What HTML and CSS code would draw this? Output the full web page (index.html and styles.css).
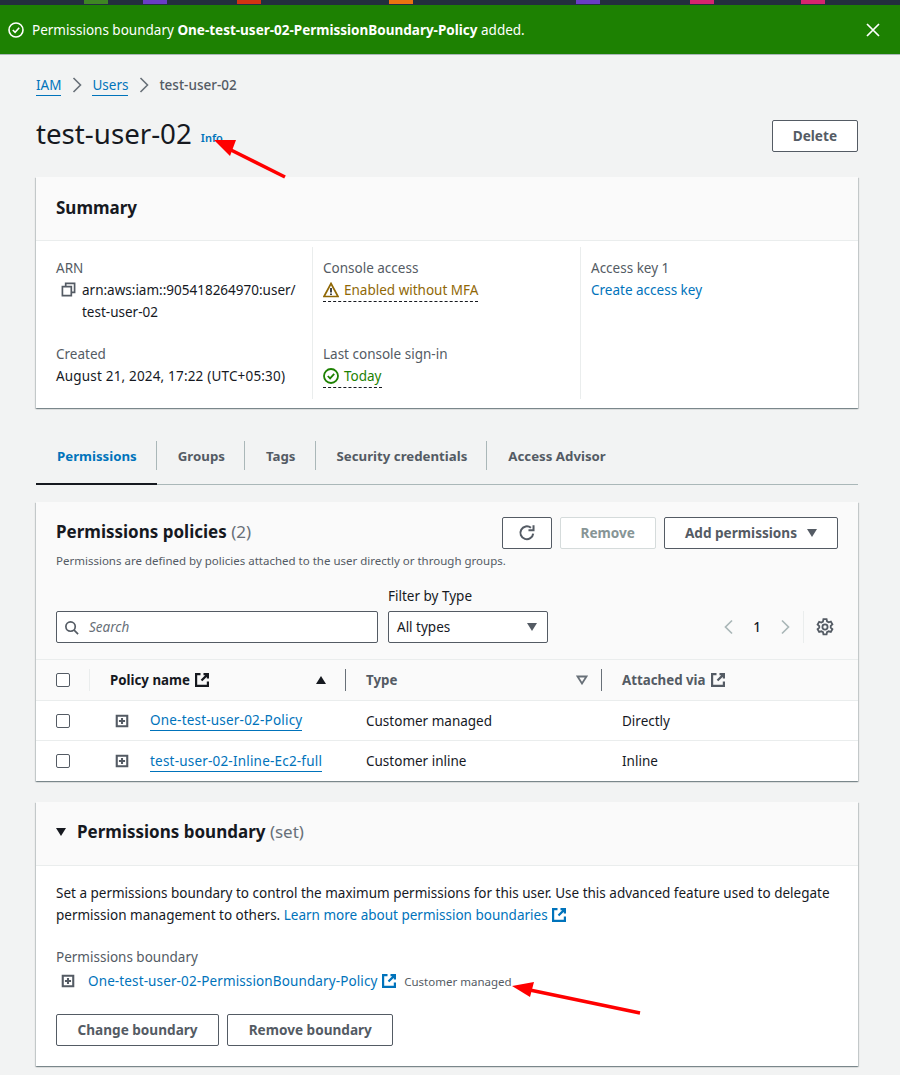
FILE: index.html
```html
<!DOCTYPE html>
<html lang="en">
<head>
  <meta charset="UTF-8">
  <title>test-user-02 | IAM</title>
  <link rel="stylesheet" href="styles.css">
</head>
<body>

<svg width="0" height="0" class="defs">
  <symbol id="ext" viewBox="0 0 16 16">
    <path d="M6.500 2.100H2.100v11.800h11.800V9.500M9.500 2.100h4.400v4.400M13.900 2.100L7.500 8.500" fill="none" stroke="currentColor" stroke-width="2.200"/>
  </symbol>
  <symbol id="expand" viewBox="0 0 16 16">
    <path d="M2 2h12v12H2zM4.500 8h7M8 4.500v7" fill="none" stroke="currentColor" stroke-width="2.400"/>
  </symbol>
</svg>

<div class="topbar">
  <i class="b1"></i><i class="b2"></i><i class="b3"></i><i class="b4"></i><i class="b5"></i><i class="b6"></i><i class="b7"></i>
</div>

<div class="flash">
  <svg class="flash-icon" viewBox="0 0 16 16"><circle cx="8" cy="8" r="7" fill="none" stroke="currentColor" stroke-width="1.600"/><path d="M4.800 8l2.300 2.400 4.100-4.600" fill="none" stroke="currentColor" stroke-width="1.600"/></svg>
  <span class="flash-text">Permissions boundary <strong>One-test-user-02-PermissionBoundary-Policy</strong> added.</span>
  <svg class="flash-close" viewBox="0 0 16 16"><path d="M2 2l12 12M14 2L2 14" fill="none" stroke="currentColor" stroke-width="1.700"/></svg>
</div>

<main>
  <div class="crumbs">
    <a href="#">IAM</a>
    <svg viewBox="0 0 16 16"><path d="M4.500 1l7 7-7 7" fill="none" stroke="currentColor" stroke-width="1.600"/></svg>
    <a href="#">Users</a>
    <svg viewBox="0 0 16 16"><path d="M4.500 1l7 7-7 7" fill="none" stroke="currentColor" stroke-width="1.600"/></svg>
    <span>test-user-02</span>
  </div>

  <div class="page-head">
    <h1>test-user-02</h1>
    <a href="#" class="info">Info</a>
    <button class="btn delete">Delete</button>
  </div>

  <section class="card summary">
    <div class="card-head"><h2>Summary</h2></div>
    <div class="summary-grid">
      <div class="col">
        <div class="field">
          <div class="label">ARN</div>
          <div class="arn">
            <svg viewBox="0 0 16 16"><path d="M5 5V1.500h9.500V11H11M1.500 5H11v9.500H1.500z" fill="none" stroke="#545b64" stroke-width="1.800"/></svg>
            <span>arn:aws:iam::905418264970:user/<br>test-user-02</span>
          </div>
        </div>
        <div class="field created">
          <div class="label">Created</div>
          <div class="value">August 21, 2024, 17:22 (UTC+05:30)</div>
        </div>
      </div>
      <div class="col">
        <div class="field">
          <div class="label">Console access</div>
          <span class="status warn">
            <svg viewBox="0 0 16 16"><path d="M8 1.500L15 14.500H1z" fill="none" stroke="currentColor" stroke-width="1.700"/><path d="M8 6v4.500M8 11.500v1.500" stroke="#16191f" stroke-width="1.600"/></svg>
            Enabled without MFA
          </span>
        </div>
        <div class="field signin">
          <div class="label">Last console sign-in</div>
          <span class="status ok">
            <svg viewBox="0 0 16 16"><circle cx="8" cy="8" r="7" fill="none" stroke="currentColor" stroke-width="1.800"/><path d="M4.800 8l2.300 2.400 4.100-4.600" fill="none" stroke="currentColor" stroke-width="1.800"/></svg>
            Today
          </span>
        </div>
      </div>
      <div class="col">
        <div class="field">
          <div class="label">Access key 1</div>
          <a href="#" class="plain-link">Create access key</a>
        </div>
      </div>
    </div>
  </section>

  <nav class="tabs">
    <a href="#" class="tab active">Permissions</a>
    <a href="#" class="tab">Groups</a>
    <a href="#" class="tab">Tags</a>
    <a href="#" class="tab">Security credentials</a>
    <a href="#" class="tab">Access Advisor</a>
  </nav>

  <section class="card policies">
    <div class="policies-head">
      <div class="title-row">
        <h2>Permissions policies <span class="count">(2)</span></h2>
        <div class="actions">
          <button class="btn refresh">
            <svg viewBox="0 0 16 16"><path d="M13.500 8.500A5.700 5.700 0 1 1 11.500 3.400" fill="none" stroke="currentColor" stroke-width="1.800"/><path d="M13.800 1v4.500H9.300" fill="none" stroke="currentColor" stroke-width="1.800"/></svg>
          </button>
          <button class="btn disabled">Remove</button>
          <button class="btn add">Add permissions <i class="caret"></i></button>
        </div>
      </div>
      <p class="desc">Permissions are defined by policies attached to the user directly or through groups.</p>
      <div class="filters">
        <div class="search">
          <svg viewBox="0 0 16 16"><circle cx="7" cy="7" r="5" fill="none" stroke="currentColor" stroke-width="1.800"/><path d="M10.500 10.500L15 15" stroke="currentColor" stroke-width="1.800"/></svg>
          <span>Search</span>
        </div>
        <div class="type-filter">
          <label>Filter by Type</label>
          <div class="select">All types <i class="caret"></i></div>
        </div>
        <div class="pager">
          <svg class="pg" viewBox="0 0 16 16"><path d="M11 1.500L4.500 8l6.500 6.500" fill="none" stroke="currentColor" stroke-width="1.700"/></svg>
          <span>1</span>
          <svg class="pg" viewBox="0 0 16 16"><path d="M5 1.500L11.500 8 5 14.500" fill="none" stroke="currentColor" stroke-width="1.700"/></svg>
          <div class="gear">
            <svg viewBox="0 0 16 16"><path d="M6.600 1h2.800l.4 2 1.400.8 2-.6 1.400 2.400-1.500 1.400v1.600l1.500 1.400-1.400 2.400-2-.6-1.400.8-.4 2H6.600l-.4-2-1.400-.8-2 .6-1.400-2.400 1.500-1.400V7.200L1.400 5.800l1.400-2.400 2 .6 1.400-.8z" fill="none" stroke="currentColor" stroke-width="1.600"/><circle cx="8" cy="8" r="2.300" fill="none" stroke="currentColor" stroke-width="1.600"/></svg>
          </div>
        </div>
      </div>
    </div>
    <table class="policy-table">
      <thead>
        <tr>
          <th class="c-check"><i class="check"></i></th>
          <th class="c-name">
            <div class="th-inner first">Policy name <svg class="ext"><use href="#ext"/></svg><i class="sort-up"></i></div>
          </th>
          <th class="c-type">
            <div class="th-inner grey">Type<svg class="sort-down" viewBox="0 0 12 10"><path d="M1.500 1.500h9L6 8.500z" fill="none" stroke="currentColor" stroke-width="1.800"/></svg></div>
          </th>
          <th class="c-via"><div class="th-inner grey">Attached via <svg class="ext"><use href="#ext"/></svg></div></th>
        </tr>
      </thead>
      <tbody>
        <tr>
          <td class="c-check"><i class="check"></i></td>
          <td class="c-name"><div class="name-cell"><svg class="exp"><use href="#expand"/></svg><a href="#">One-test-user-02-Policy</a></div></td>
          <td class="c-type">Customer managed</td>
          <td class="c-via">Directly</td>
        </tr>
        <tr>
          <td class="c-check"><i class="check"></i></td>
          <td class="c-name"><div class="name-cell"><svg class="exp"><use href="#expand"/></svg><a href="#">test-user-02-Inline-Ec2-full</a></div></td>
          <td class="c-type">Customer inline</td>
          <td class="c-via">Inline</td>
        </tr>
      </tbody>
    </table>
  </section>

  <section class="card boundary">
    <div class="card-head boundary-head">
      <i class="caret dark"></i>
      <h2>Permissions boundary <span class="count">(set)</span></h2>
    </div>
    <div class="boundary-body">
      <p>Set a permissions boundary to control the maximum permissions for this user. Use this advanced feature used to delegate permission management to others. <a href="#" class="plain-link">Learn more about permission boundaries <svg class="ext"><use href="#ext"/></svg></a></p>
      <div class="label">Permissions boundary</div>
      <div class="boundary-policy">
        <svg class="exp"><use href="#expand"/></svg>
        <a href="#" class="plain-link policy-link">One-test-user-02-PermissionBoundary-Policy <svg class="ext"><use href="#ext"/></svg></a>
        <span class="small">Customer managed</span>
      </div>
      <div class="boundary-actions">
        <button class="btn">Change boundary</button>
        <button class="btn">Remove boundary</button>
      </div>
    </div>
  </section>
</main>

<!-- red annotation arrows drawn over the screenshot -->
<svg class="arrows" width="900" height="1075" viewBox="0 0 900 1075">
  <path d="M285 177L225 147" stroke="#f00" stroke-width="3.500"/>
  <path d="M214 140L236 140L230 156z" fill="#f00"/>
  <path d="M640 1013L525 989" stroke="#f00" stroke-width="3.500"/>
  <path d="M512 986L534 982L530 997z" fill="#f00"/>
</svg>

</body>
</html>
```

FILE: styles.css
```css
* {
  box-sizing: border-box;
  margin: 0;
  padding: 0;
}

body {
  background: #f2f3f3;
  color: #16191f;
  font-family: "Noto Sans", sans-serif;
  font-size: 13.500px;
  line-height: 22px;
  height: 1075px;
  overflow: hidden;
  position: relative;
}

a {
  color: #0073bb;
  text-decoration: none;
}

.defs {
  position: absolute;
}

/* top strip */
.topbar {
  background: #232f3e;
  height: 5px;
  position: relative;
}

.topbar i {
  position: absolute;
  top: 0;
  width: 24px;
  height: 4px;
}

.b1 { left: 84px; background: #3f8624; }
.b2 { left: 143px; background: #693cc5; }
.b3 { left: 237px; background: #d13212; }
.b4 { left: 389px; background: #ec7211; }
.b5 { left: 576px; background: #693cc5; }
.b6 { left: 690px; background: #d6246e; }
.b7 { left: 801px; background: #d6246e; }

.flash {
  background: #1d8102;
  color: #fff;
  height: 50px;
  display: flex;
  align-items: center;
  padding: 1px 19px 0 8px;
  border-bottom: 1px solid #aab7b8;
}

.flash-icon {
  width: 16px;
  height: 16px;
  margin-right: 8px;
}

.flash-text {
  flex: 1;
}

.flash-close {
  width: 16px;
  height: 16px;
}

main {
  padding: 0 42px 0 36px;
}

.crumbs {
  display: flex;
  align-items: center;
  height: 22px;
  margin-top: 19px;
  color: #545b64;
}

.crumbs a {
  border-bottom: 1px solid #0073bb;
  line-height: 20px;
}

.crumbs svg {
  width: 16px;
  height: 16px;
  margin: 0 7.500px;
  color: #687078;
}

.crumbs span {
  font-weight: 500;
}

.page-head {
  display: flex;
  align-items: center;
  height: 32px;
  margin-top: 24px;
}

h1 {
  font-size: 27.700px;
  font-weight: 400;
  line-height: 32px;
  margin-top: -6px;
}

.info {
  font-size: 11px;
  font-weight: 600;
  margin: 4px 0 0 9px;
}

.btn {
  background: #fff;
  border: 1px solid #545b64;
  border-radius: 2px;
  color: #545b64;
  font-family: inherit;
  font-size: 13.600px;
  font-weight: 700;
  height: 32px;
  line-height: 22px;
  padding: 0 20px;
}

.delete {
  margin-left: auto;
}

.card {
  background: #fff;
  box-shadow: 0 1px 1px 0 rgba(0, 28, 36, 0.3), 1px 1px 1px 0 rgba(0, 28, 36, 0.15), -1px 1px 1px 0 rgba(0, 28, 36, 0.15);
}

.card-head {
  background: #fafafa;
  border-bottom: 1px solid #eaeded;
  height: 64px;
  padding: 0 20px 2px;
  display: flex;
  align-items: center;
}

h2 {
  font-size: 17px;
  font-weight: 700;
}

.count {
  color: #687078;
  font-weight: 400;
}

.summary {
  margin-top: 25px;
  height: 231px;
}

.summary-grid {
  display: grid;
  grid-template-columns: 276px 268px 1fr;
  padding-top: 6px;
}

.col {
  height: 152px;
  padding: 10px 10px 0 10px;
  border-left: 1px solid #eaeded;
}

.col:first-child {
  border-left: 0;
  padding-left: 20px;
}

.label {
  color: #545b64;
}

.arn {
  display: flex;
  margin-left: 5px;
}

.arn svg {
  width: 15px;
  height: 15px;
  margin: 3px 6px 0 0;
  flex: none;
}

.created {
  margin-top: 20px;
}

.value {
  letter-spacing: 0.180px;
}

.signin {
  margin-top: 39px;
}

.status {
  display: inline-flex;
  align-items: center;
  gap: 5px;
  border-bottom: 1px dashed #16191f;
  line-height: 22px;
}

.status svg {
  width: 16px;
  height: 16px;
}

.warn {
  color: #906806;
}

.ok {
  color: #1d8102;
}

.plain-link {
  color: #0073bb;
}

.ext {
  width: 16px;
  height: 16px;
  vertical-align: -3px;
}

/* tabs */
.tabs {
  display: flex;
  align-items: flex-start;
  height: 77px;
  margin-top: 32px;
  position: relative;
  padding-bottom: 17px;
  background: linear-gradient(#aab7b8, #aab7b8) no-repeat 0 44px / 100% 1px;
}

.tab {
  color: #545b64;
  font-size: 13.250px;
  font-weight: 700;
  height: 45px;
  padding: 5px 20px 0 21px;
  position: relative;
}

.tab::after {
  content: "";
  position: absolute;
  right: 0;
  top: 1px;
  height: 29px;
  border-right: 1px solid #aab7b8;
}

.tab:last-child::after {
  display: none;
}

.tab.active {
  color: #0073bb;
  border-bottom: 2px solid #16191f;
}

/* permissions policies */
.policies {
  margin-top: -15px;
  background: #fff;
}

.policies-head {
  background: #fafafa;
  height: 158px;
  padding: 15px 20px 0;
  border-bottom: 1px solid #eaeded;
}

.title-row {
  display: flex;
  align-items: center;
  justify-content: space-between;
}

.title-row h2 {
  margin-top: -2px;
}

.actions {
  display: flex;
  gap: 8px;
}

.refresh {
  width: 50px;
  padding: 0;
  display: flex;
  align-items: center;
  justify-content: center;
}

.refresh svg {
  width: 18px;
  height: 18px;
}

.disabled {
  border-color: #d5dbdb;
  color: #879596;
}

.add {
  display: flex;
  align-items: center;
  gap: 10px;
}

.caret {
  display: inline-block;
  width: 0;
  height: 0;
  border-left: 5.500px solid transparent;
  border-right: 5.500px solid transparent;
  border-top: 8px solid #545b64;
}

.desc {
  color: #545b64;
  font-size: 11.500px;
  line-height: 16px;
  margin-top: 4px;
}

.filters {
  display: flex;
  align-items: flex-end;
  margin-top: 16px;
}

.search {
  width: 322px;
  height: 32px;
  background: #fff;
  border: 1px solid #545b64;
  border-radius: 2px;
  display: flex;
  align-items: center;
  gap: 10px;
  padding: 0 7px;
  color: #687078;
}

.search svg {
  width: 15px;
  height: 15px;
  color: #545b64;
}

.search span {
  font-style: italic;
}

.type-filter {
  margin-left: 10px;
  width: 160px;
}

.select {
  height: 32px;
  background: #fff;
  border: 1px solid #545b64;
  border-radius: 2px;
  display: flex;
  align-items: center;
  justify-content: space-between;
  padding: 0 10px 0 8px;
  margin-top: 4px;
}

.pager {
  margin-left: auto;
  padding-right: 4px;
  display: flex;
  align-items: center;
  height: 32px;
  font-weight: 500;
}

.pg {
  width: 16px;
  height: 16px;
  color: #aab7b8;
}

.pager span {
  margin: 0 16px;
}

.gear {
  border-left: 1px solid #eaeded;
  height: 32px;
  margin-left: 10px;
  padding-left: 12px;
  display: flex;
  align-items: center;
  color: #545b64;
}

.gear svg {
  width: 18px;
  height: 18px;
}

.policy-table {
  border-collapse: collapse;
  width: 100%;
  table-layout: fixed;
}

.policy-table th {
  background: #fafafa;
  font-size: 13.300px;
  height: 40px;
  text-align: left;
  font-weight: 700;
  border-bottom: 1px solid #eaeded;
}

.policy-table td {
  height: 40px;
  padding-top: 1px;
  border-top: 1px solid #eaeded;
}

.policy-table tbody tr:first-child td {
  border-top: 0;
}

.policy-table tbody tr:last-child td {
  height: 41px;
}

.c-check {
  width: 53px;
}

.c-name {
  width: 257px;
}

.c-type {
  width: 256px;
  padding-left: 20px;
}

.c-via {
  padding-left: 20px;
}

.check {
  display: block;
  width: 14px;
  height: 14px;
  margin-left: 20px;
  background: #fff;
  border: 1px solid #545b64;
  border-radius: 2px;
}

.th-inner {
  display: flex;
  align-items: center;
  gap: 4px;
  height: 22px;
  position: relative;
}

.first {
  padding-left: 20px;
  border-left: 1px solid #eaeded;
  border-right: 1px solid #687078;
  padding-right: 19px;
}

.grey {
  color: #545b64;
}

.sort-up {
  margin-left: auto;
  width: 0;
  height: 0;
  border-left: 5.500px solid transparent;
  border-right: 5.500px solid transparent;
  border-bottom: 8px solid #16191f;
}

.sort-down {
  position: absolute;
  right: 13px;
  width: 12px;
  height: 10px;
  color: #687078;
}

.c-type .th-inner {
  border-right: 1px solid #687078;
}

.name-cell {
  display: flex;
  align-items: center;
  padding-left: 26px;
  gap: 21px;
}

.name-cell a {
  border-bottom: 1px solid #0073bb;
  letter-spacing: 0.200px;
  line-height: 20px;
}

.exp {
  width: 14px;
  height: 14px;
  color: #545b64;
  flex: none;
}

/* boundary */
.boundary {
  margin-top: 21px;
  height: 264px;
}

.boundary-head {
  gap: 11px;
  padding-bottom: 4px;
}

.boundary-head .caret.dark {
  border-top-color: #16191f;
}

.boundary-body {
  padding: 16px 20px 0;
}

.boundary-body p {
  margin-bottom: 20px;
}

.boundary-policy {
  display: flex;
  align-items: center;
  padding-left: 5px;
  margin-top: 1px;
}

.boundary-policy .exp {
  margin-right: 13px;
}

.policy-link {
  letter-spacing: 0.120px;
}

.small {
  color: #545b64;
  font-size: 11.500px;
  margin: 2px 0 0 7px;
}

.boundary-actions {
  display: flex;
  gap: 8px;
  margin-top: 21px;
}

.boundary-actions .btn {
  padding: 0 20.500px;
}

.arrows {
  position: absolute;
  left: 0;
  top: 0;
  pointer-events: none;
}
```
